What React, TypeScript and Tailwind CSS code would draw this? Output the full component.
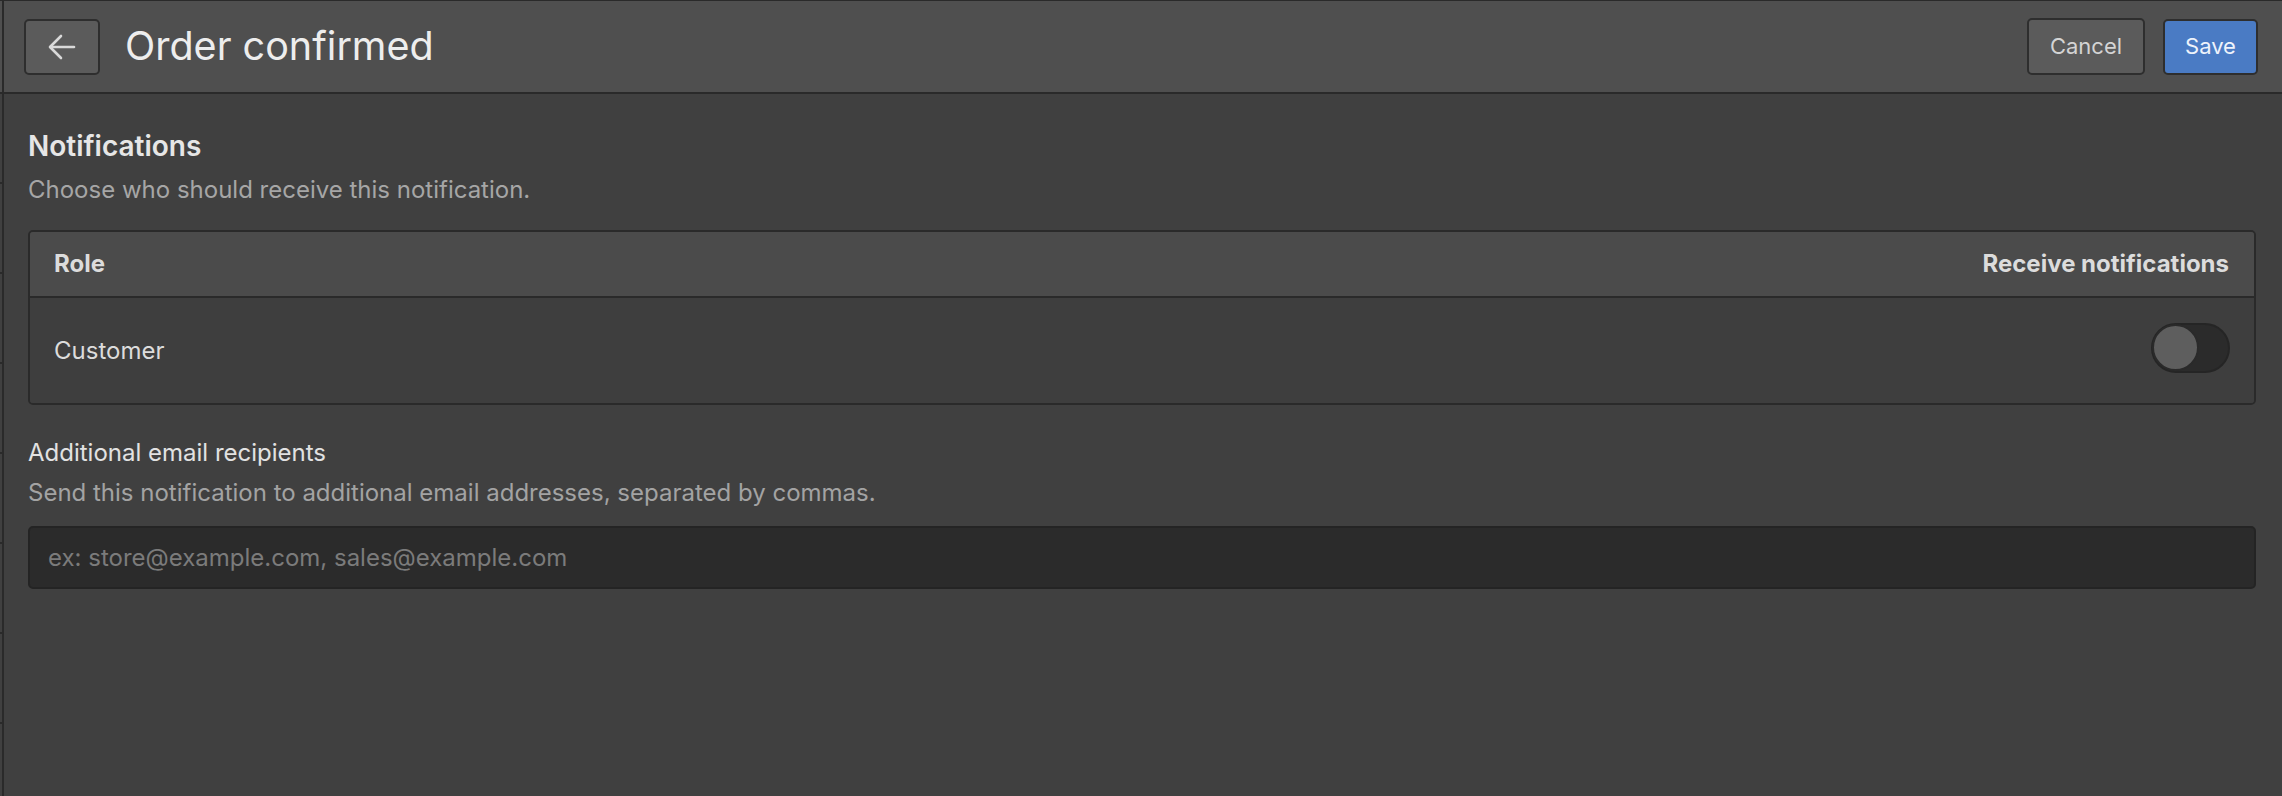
import React from 'react';

const marks = [0, 1, 2, 3, 4, 5, 6];

function BackArrow() {
  return (
    <svg width="28" height="26" viewBox="0 0 28 26" fill="none" stroke="#d9d9d9" strokeWidth="2.6" strokeLinecap="round" strokeLinejoin="round">
      <path d="M26 13H2.5" />
      <path d="M13 2L2 13l11 11" />
    </svg>
  );
}

export default function App() {
  return (
    <div className="flex h-[796px] w-full overflow-hidden border-t border-[#2a2a2a] bg-[#404040] font-['Inter','Noto_Sans',sans-serif]">
      {/* Left edge — neighbouring list */}
      <div className="flex w-[2px] shrink-0 flex-col">
        <div className="h-[91px] bg-[#4f4f4f]" />
        <div className="h-[2px] bg-[#2a2a2a]" />
        {marks.map((m) => (
          <div key={m} className="flex flex-col">
            <div className="h-[88px]" />
            <div className="h-[2px] bg-[#2a2a2a]" />
          </div>
        ))}
      </div>
      <div className="w-[2px] shrink-0 bg-[#2a2a2a]" />

      <div className="flex min-w-0 flex-1 flex-col">
        {/* Header */}
        <header className="flex h-[93px] shrink-0 items-center justify-between border-b-2 border-[#2a2a2a] bg-[#4f4f4f] pl-5 pr-6">
          <div className="flex items-center gap-[25px]">
            <button className="flex h-[56px] w-[76px] items-center justify-center rounded-[5px] border-2 border-[#2e2e2e] bg-[#5b5b5b]">
              <BackArrow />
            </button>
            <h1 className="text-[39.5px] font-normal leading-none text-[#ededed]">Order confirmed</h1>
          </div>
          <div className="flex items-center gap-[18px]">
            <button className="flex h-[57px] w-[118px] items-center justify-center rounded-[5px] border-2 border-[#2e2e2e] bg-[#5b5b5b] text-[22px] text-[#d4d4d4]">
              Cancel
            </button>
            <button className="flex h-[56px] w-[95px] items-center justify-center rounded-[5px] border-2 border-[#2e2e2e] bg-[#4a7bc4] text-[22px] text-[#eef3fb]">
              Save
            </button>
          </div>
        </header>

        {/* Content */}
        <main className="flex flex-col pl-6 pr-[26px] pt-[35px]">
          <h2 className="text-[28px] font-semibold leading-[35px] text-[#e6e6e6]">Notifications</h2>
          <p className="mt-[9px] text-[24px] leading-[33px] text-[#a6a6a6]">Choose who should receive this notification.</p>

          <div className="mt-[24px] overflow-hidden rounded-[5px] border-2 border-[#2a2a2a]">
            <div className="flex h-[66px] items-center justify-between border-b-2 border-[#2a2a2a] bg-[#4b4b4b] pl-6 pr-[25px]">
              <span className="text-[24px] font-bold text-[#dcdcdc]">Role</span>
              <span className="text-[24px] font-bold text-[#dcdcdc]">Receive notifications</span>
            </div>
            <div className="flex h-[105px] items-center justify-between bg-[#3e3e3e] pl-6 pr-6">
              <span className="text-[24px] text-[#dcdcdc]">Customer</span>
              <div className="-mt-[6px] flex h-[50px] w-[79px] items-center rounded-full border-2 border-[#252525] bg-[#2b2b2b]">
                <div className="h-[47px] w-[47px] -ml-[1px] rounded-full border-2 border-[#2a2a2a] bg-[#5e5e5e]" />
              </div>
            </div>
          </div>

          <h3 className="mt-[31px] text-[24px] leading-[33px] text-[#e2e2e2]">Additional email recipients</h3>
          <p className="mt-[7px] text-[24px] leading-[33px] text-[#a3a3a3]">
            Send this notification to additional email addresses, separated by commas.
          </p>
          <input
            className="mt-[17px] h-[63px] w-full rounded-[5px] border-2 border-[#242424] bg-[#2b2b2b] px-[18px] text-[24px] text-[#dcdcdc] outline-none placeholder:text-[#7b7b7b]"
            placeholder="ex: store@example.com, sales@example.com"
          />
        </main>
      </div>
    </div>
  );
}
